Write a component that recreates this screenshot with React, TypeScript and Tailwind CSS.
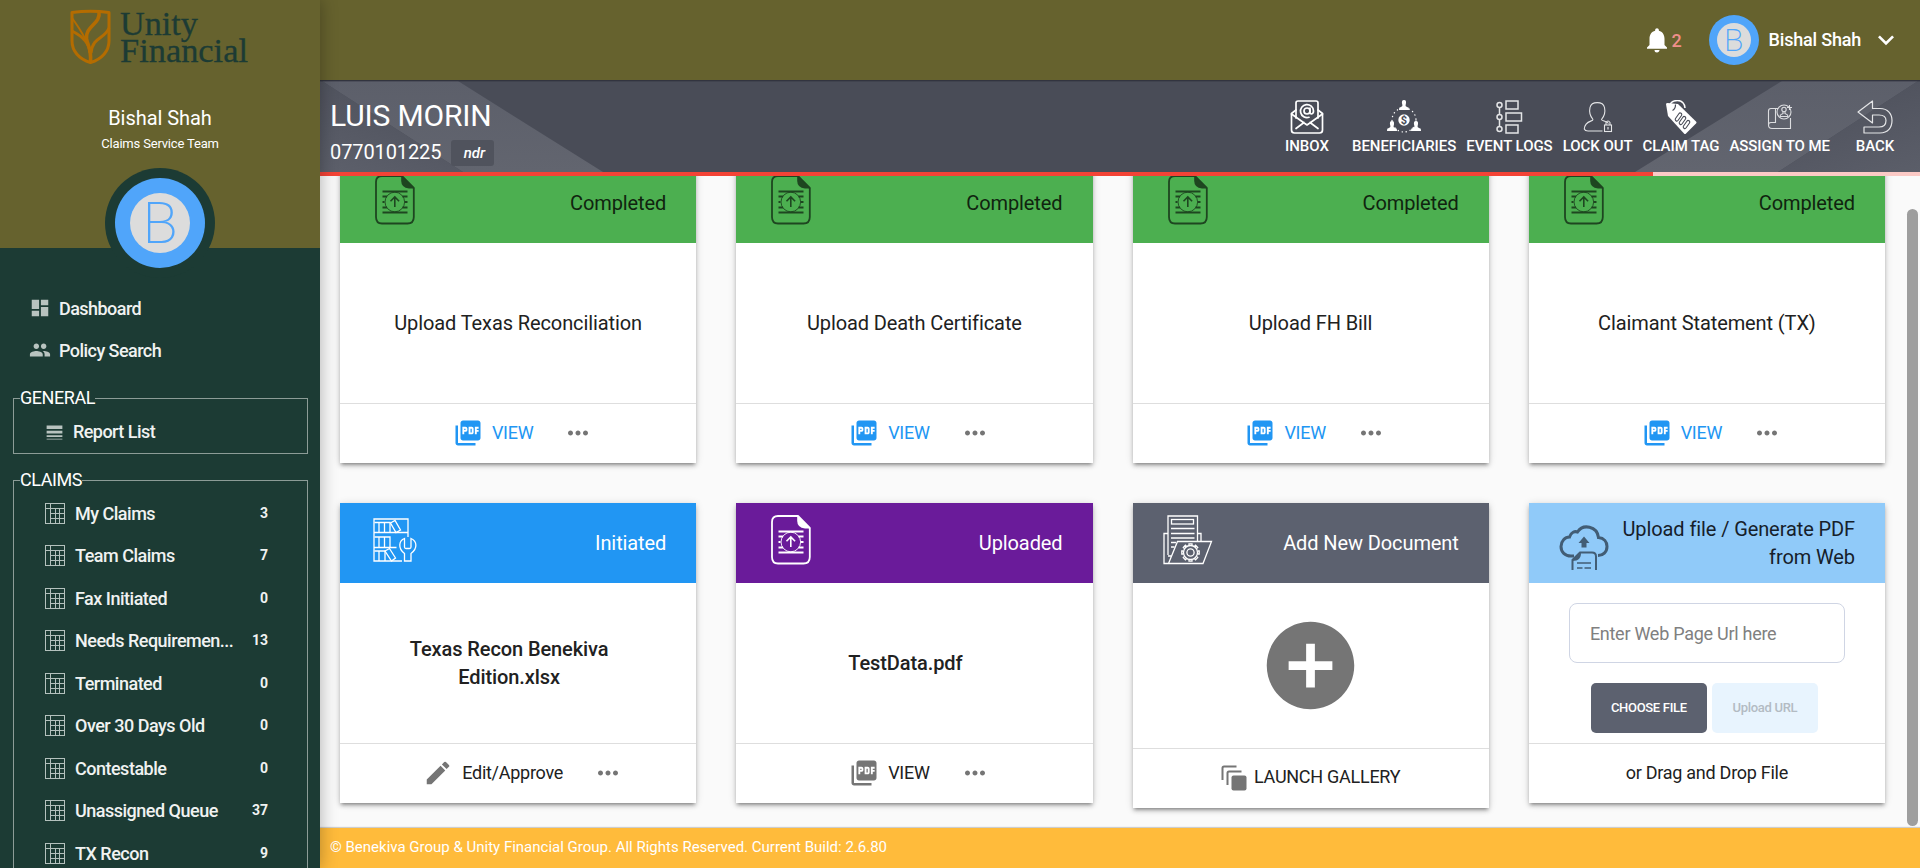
import React from "react";
import {
  MdAddCircle,
  MdDashboard,
  MdEdit,
  MdExpandMore,
  MdLineWeight,
  MdMoreHoriz,
  MdNotifications,
  MdPeople,
  MdPictureAsPdf,
} from "react-icons/md";

const cardShadow =
  "shadow-[0_3px_3px_-2px_rgba(0,0,0,0.3),0_3px_4px_0_rgba(0,0,0,0.18),0_1px_8px_0_rgba(0,0,0,0.14)]";

function Logo() {
  return (
    <svg width="184" height="66" viewBox="0 0 184 66" className="overflow-visible" aria-label="Unity Financial">
      <g fill="none" stroke="#b46c00" strokeWidth="3" strokeLinejoin="round">
        <path d="M4 5.500Q22.500 3 41 5.500V34C41 44 34 52 22.500 55.500C11 52 4 44 4 34Z" />
        <path d="M31 5C33 17 17 19 18.500 32C20 39 23.500 42 22.500 55" strokeWidth="3.600" />
        <path d="M4 24C14 29 21.500 36 22 46" />
        <path d="M41 21C36 33 25 29 23 46" />
        <path d="M4 11C10 19 13 24 18 33" strokeWidth="2" />
      </g>
      <g fill="#1c3b34" stroke="#1c3b34" strokeWidth="0.300" fontFamily="'Liberation Serif', serif" fontSize="34">
        <text x="52" y="27.500" textLength="78" lengthAdjust="spacingAndGlyphs">Unity</text>
        <text x="52" y="55" textLength="128" lengthAdjust="spacingAndGlyphs">Financial</text>
      </g>
    </svg>
  );
}

function SheetIcon() {
  return (
    <svg width="20" height="21" viewBox="0 0 20 21" fill="none" stroke="#b4c1bd" className="shrink-0">
      <rect x="0.500" y="0.500" width="19" height="20" />
      <path d="M5.500 0V20M0 5.500H20M10.500 5.500V20M14.500 5.500V20M5.500 10.500H20M5.500 15.500H20" />
    </svg>
  );
}

const queues: [string, number][] = [
  ["My Claims", 3],
  ["Team Claims", 7],
  ["Fax Initiated", 0],
  ["Needs Requiremen...", 13],
  ["Terminated", 0],
  ["Over 30 Days Old", 0],
  ["Contestable", 0],
  ["Unassigned Queue", 37],
  ["TX Recon", 9],
];

function Sidebar() {
  return (
    <aside className="relative z-20 flex h-full w-[320px] shrink-0 flex-col overflow-clip bg-[#1c3b34] text-white">
      <div className="flex h-[248px] shrink-0 flex-col items-center bg-[#66622e]">
        <div className="flex h-[104px] w-full shrink-0 justify-center pt-[7px]">
          <Logo />
        </div>
        <div className="text-[20px] leading-[28px] tracking-[-0.050px]">Bishal Shah</div>
        <div className="text-[13px] leading-[23px] tracking-[-0.180px]">Claims Service Team</div>
        <div className="mt-[13px] flex size-[110px] shrink-0 items-center justify-center rounded-full bg-[#1c3b34]">
          <div className="flex size-[90px] items-center justify-center rounded-full bg-[#50a5fa]">
            <div className="flex size-[60px] items-center justify-center rounded-full bg-[#dcdcdc] text-[58px] leading-none font-extralight text-[#50a5fa]">
              B
            </div>
          </div>
        </div>
      </div>
      <nav className="mt-[39px] flex flex-col text-[18px] font-medium tracking-[-0.550px] text-[#f0f2f1]">
        <a className="flex h-[42px] items-center gap-[8px] pl-[29px]">
          <MdDashboard size={22} className="text-[#b8c3bf]" />
          Dashboard
        </a>
        <a className="flex h-[42px] items-center gap-[8px] pl-[29px]">
          <MdPeople size={22} className="text-[#b8c3bf]" />
          Policy Search
        </a>
      </nav>
      <fieldset className="mr-[12px] ml-[13px] mt-[13px] flex h-[70px] shrink-0 border border-[#8c9c97] pl-[30px]">
        <legend className="ml-[-24px] text-[18px] leading-[28px] tracking-[-0.450px]">GENERAL</legend>
        <a className="flex h-[38px] items-center gap-[8px] text-[18px] font-medium tracking-[-0.550px] text-[#f0f2f1]">
          <MdLineWeight size={21} className="mt-[2px] text-[#b8c3bf]" />
          Report List
        </a>
      </fieldset>
      <fieldset className="mr-[12px] ml-[13px] mt-[12px] h-[500px] shrink-0 border border-[#8c9c97] pl-[31px]">
        <legend className="ml-[-25px] text-[18px] leading-[28px] tracking-[-0.450px]">CLAIMS</legend>
        <div className="-mt-[2px]">
          {queues.map(([name, count]) => (
            <a key={name} className="flex h-[42.500px] items-center text-[#f0f2f1]">
              <SheetIcon />
              <span className="ml-[10px] w-[160px] text-[18px] font-medium tracking-[-0.500px] whitespace-nowrap">{name}</span>
              <span className="w-[33px] text-right text-[14px] font-bold">{count}</span>
            </a>
          ))}
        </div>
      </fieldset>
    </aside>
  );
}

function InboxIcon() {
  return (
    <svg width="34" height="34" viewBox="0 0 34 34" fill="none" stroke="#fff" strokeWidth="1.700" strokeLinejoin="round" strokeLinecap="round">
      <path d="M6 18V3Q6 1 8 1H26Q28 1 28 3V18" />
      <path d="M6 10L1.500 13.500V30Q1.500 33 4.500 33H29.500Q32.500 33 32.500 30V13.500L28 10" />
      <path d="M1.500 14L17 25L32.500 14M6 28.500L14 22.500M28 28.500L20 22.500" />
      <circle cx="17" cy="11" r="3" />
      <path d="M20 8V12.500Q20 14 21.500 14Q23.500 13.500 23.500 11A6.500 6.500 0 1 0 19 17.300" />
    </svg>
  );
}

function BeneficiariesIcon() {
  const person = "M3 0C.8 0 .6 2 1.200 4.200C1.700 6 1.500 6.400-1.500 7.500Q-2 8-2 10H8Q8 8 7.500 7.500C4.500 6.400 4.300 6 4.800 4.200C5.400 2 5.200 0 3 0Z";
  return (
    <svg width="34" height="34" viewBox="0 0 34 34" fill="#fff">
      <path d={person} transform="translate(14 0)" />
      <path d={person} transform="translate(2 21)" />
      <path d={person} transform="translate(26 21)" />
      <circle cx="17" cy="20" r="5.700" />
      <circle cx="17" cy="20" r="12" fill="none" stroke="#fff" strokeWidth="1.400" strokeDasharray="0.100 4" strokeLinecap="round" />
      <text x="17" y="24" textAnchor="middle" fontSize="11" fontFamily="Roboto, sans-serif" fill="#494c57" fontWeight="700">$</text>
    </svg>
  );
}

function EventLogsIcon() {
  return (
    <svg width="34" height="34" viewBox="0 0 34 34" fill="none" stroke="#e4e5e7" strokeWidth="1.500">
      <rect x="14" y="1" width="12" height="8" />
      <rect x="14" y="13" width="15.500" height="8" />
      <rect x="14" y="25" width="12" height="8" />
      <circle cx="7.500" cy="5" r="2.500" />
      <circle cx="7.500" cy="17" r="2.500" />
      <circle cx="7.500" cy="29" r="2.500" />
      <path d="M7.500 7.500V14.500M7.500 19.500V26.500" />
    </svg>
  );
}

function LockOutIcon() {
  return (
    <svg width="34" height="34" viewBox="-2.500 0 34 34" fill="none" stroke="#e4e5e7" strokeWidth="1.100">
      <path d="M9.500 19.500C7 16.500 5.500 12 6.500 7.500C8 1 19.500 1 21 7.500C22 12 20.500 16.500 18 19.500C18 21 23.500 21 25 23.500M9.500 19.500C9.500 22 1.500 20 .8 29Q1.500 31 4.500 31H19" />
      <rect x="21" y="25" width="7" height="6.500" />
      <path d="M22.500 25V22.500Q24.500 19.500 26.500 22.500V25M24.500 27V29.500" />
    </svg>
  );
}

function ClaimTagIcon() {
  return (
    <svg width="34" height="34" viewBox="0 0 34 34">
      <path d="M2 4Q2.200 3 3.500 3L14 4L32 21.500Q33 22.500 32 23.500L22 33.500Q21 34.500 20 33.500L4 16Z" fill="#fff" />
      <path d="M6.500 9.500C4 3 9 .5 13.500 .5C18 .5 21 4 21 8" fill="none" stroke="#fff" strokeWidth="1.500" />
      <path d="M11.500 4.500Q11.500 9 8.500 10.500" fill="none" stroke="#494c57" strokeWidth="1.200" />
      <g fill="#fff" stroke="#494c57" strokeWidth="1.100">
        <rect x="-1.600" y="-4.500" width="3.200" height="9" rx="1.600" transform="translate(14.500 17) rotate(35)" />
        <rect x="-1.600" y="-4.500" width="3.200" height="9" rx="1.600" transform="translate(18.500 20.500) rotate(35)" />
        <rect x="-1.600" y="-4.500" width="3.200" height="9" rx="1.600" transform="translate(22.500 24.500) rotate(35)" />
      </g>
    </svg>
  );
}

function AssignIcon() {
  return (
    <svg width="34" height="34" viewBox="-1 0 34 34" fill="none" stroke="#dcdde0" strokeWidth="1.100">
      <path d="M11.500 8.500H7Q4.500 8.500 4.500 11V25Q4.500 28.500 8 28.500H26.500V18M11.500 8.500V22.500H7Q4.500 22.500 4.500 25M11.500 8.500H14" />
      <circle cx="20" cy="12" r="7" />
      <circle cx="20" cy="9.500" r="2.200" />
      <path d="M15.800 16.500Q16 14.500 19 13.500V11.500M24.200 16.500Q24 14.500 21 13.500V11.500M15.800 16.500H24.200M25.500 5V10M23 7.500H28" />
    </svg>
  );
}

function BackIcon() {
  return (
    <svg width="36" height="34" viewBox="0 0 36 34" fill="none" stroke="#e4e5e7" strokeWidth="1.200" strokeLinejoin="round">
      <path d="M1 12L15.500 1V8.500H23C31 8.500 35 14 35 20.500C35 27.500 31 33 23 33H7V27H22C27 27 29 24 29 20.500C29 17.500 27 15 22 15H15.500V23Z" />
    </svg>
  );
}

const tools = [
  { label: "INBOX", icon: InboxIcon },
  { label: "BENEFICIARIES", icon: BeneficiariesIcon },
  { label: "EVENT LOGS", icon: EventLogsIcon },
  { label: "LOCK OUT", icon: LockOutIcon },
  { label: "CLAIM TAG", icon: ClaimTagIcon },
  { label: "ASSIGN TO ME", icon: AssignIcon },
  { label: "BACK", icon: BackIcon },
];

function ToolbarBackdrop() {
  return (
    <svg className="absolute inset-0" width="1600" height="92" viewBox="0 0 1600 92">
      <defs>
        <linearGradient id="band" x1="0" y1="0" x2="0" y2="1">
          <stop offset="0" stopColor="#5c5f6a" />
          <stop offset="1" stopColor="#62656f" />
        </linearGradient>
        <linearGradient id="corner" x1="0" y1="1" x2="0.450" y2="0.150">
          <stop offset="0" stopColor="#5d606b" />
          <stop offset="1" stopColor="#50535e" />
        </linearGradient>
        <linearGradient id="cornerRight" x1="1" y1="1" x2="0.550" y2="0.150">
          <stop offset="0" stopColor="#5b5e69" />
          <stop offset="1" stopColor="#50535e" />
        </linearGradient>
      </defs>
      <path d="M2 1H138L283 92H143Z" fill="url(#band)" />
      <path d="M0 1H2L143 92H0Z" fill="url(#corner)" />
      <path d="M1598 1H1462L1315 92H1458Z" fill="url(#band)" />
      <path d="M1600 1H1598L1458 92H1600Z" fill="url(#cornerRight)" />
      <path d="M0 0.500H1600" stroke="#32343f" />
      <path d="M0 1.500H1600" stroke="#32343f" strokeOpacity="0.350" />
    </svg>
  );
}

function Header() {
  return (
    <>
      <header className="flex h-[80px] shrink-0 items-center justify-end bg-[#66622e] pr-[18px] text-white">
        <MdNotifications size={30} />
        <span className="ml-[-0.500px] text-[18px] font-medium text-[#ef8f8a]">2</span>
        <div className="ml-[27px] flex size-[50px] items-center justify-center rounded-full bg-[#50a5fa]">
          <div className="flex size-[34px] items-center justify-center rounded-full bg-[#dcdcdc] text-[32px] leading-none font-extralight text-[#50a5fa]">
            B
          </div>
        </div>
        <span className="mr-[9px] ml-[10px] -mt-[2px] text-[18px] font-medium tracking-[-0.200px]">Bishal Shah</span>
        <MdExpandMore size={32} />
      </header>
      <div className="relative flex h-[92px] shrink-0 justify-between bg-[#494c57] text-white">
        <ToolbarBackdrop />
        <div className="relative pt-[17px] pl-[10px]">
          <div className="text-[30px] leading-[38px] tracking-[-0.150px]">LUIS MORIN</div>
          <div className="flex items-center">
            <span className="text-[20px] leading-[34px] tracking-[-0.100px]">0770101225</span>
            <span className="mt-[2px] ml-[10px] flex h-[26px] w-[43px] items-center justify-center rounded-[3px] bg-[#50535d] pl-[3px] text-[15px] font-medium italic">
              ndr
            </span>
          </div>
        </div>
        <div className="relative flex gap-[10px] pt-[20px] pr-[10px]">
          {tools.map(({ label, icon: Icon }) => (
            <div key={label} className="flex min-w-[70px] flex-col items-center">
              <Icon />
              <span className="text-[15px] leading-[24px] font-medium tracking-[-0.050px] whitespace-nowrap">{label}</span>
            </div>
          ))}
        </div>
      </div>
      <div className="flex h-[4px] shrink-0 bg-[#fccac6]">
        <div className="w-[1333px] bg-[#f44336]" />
      </div>
    </>
  );
}

function UploadDocIcon() {
  return (
    <svg width="50" height="50" viewBox="0 0 50 50" fill="none" stroke="currentColor">
      <path d="M32 1H12Q6 1 6 7V42Q6 48.500 12 48.500H37.500Q43.800 48.500 43.800 42V13Z" strokeWidth="1.800" strokeLinejoin="round" />
      <path d="M31.200 .5L44.500 13.500H39Q31.200 12.500 31.200 6Z" fill="currentColor" stroke="none" />
      <path d="M12.500 16.500H37.500M12.500 37.500H37.500M12.500 21.500H17M32.500 21.500H37.500M12.500 27H14.500M35 27H37.500M12.500 32.500H17M32.500 32.500H37.500" strokeWidth="1.800" />
      <circle cx="24.800" cy="27" r="9.800" strokeWidth="0.900" />
      <path d="M24.800 32V22.300M20.500 26.300L24.800 22L29.100 26.300" strokeWidth="1.600" />
    </svg>
  );
}

function ShelfIcon() {
  return (
    <svg width="50" height="50" viewBox="0 0 50 50" fill="none" stroke="#fff" strokeWidth="1.300">
      <path d="M38 22V4H4V46H32M4 17.500H38M4 32.500H26.500" />
      <path d="M4.500 7.500H20V17M9 7.500V17M14.500 7.500V17M4.500 22H20V32M9 22V32M14.500 22V32M4.500 36H15V46M9 36V46" />
      <path d="M20.500 8L25 5.500L30.500 15L26 17.500ZM15 36L19.500 33.500L25.500 43L21.500 46Z" />
      <path d="M34.500 23.500C29 25.500 27.500 33 34.500 38.500V46H41V38.500C48 33.500 47 26 41 23.500V32Q41 33.500 39.500 33.500H36Q34.500 33.500 34.500 32Z" />
    </svg>
  );
}

function FolderGearIcon() {
  const teeth = Array.from({ length: 8 }, (_, i) => i * 45);
  return (
    <svg width="50" height="50" viewBox="0 0 50 50" fill="none" stroke="#fff" strokeWidth="1.300">
      <path d="M5 40V1H34.500V26M5 18.500H1V48.500H40L48.500 26.500H14.500L5.500 48.500M34.500 18.500H38V26" />
      <rect x="8.500" y="4.500" width="22" height="4.500" />
      <path d="M8 13.500H31.500M8 18.500H31.500M8 23H31.500M8 27.500H13M8 32H11.500M5 41H8" />
      <circle cx="27.500" cy="37.500" r="3.600" />
      <circle cx="27.500" cy="37.500" r="7" />
      {teeth.map((a) => (
        <path key={a} d="M26 30.500V28.800H29V30.500" transform={`rotate(${a} 27.500 37.500)`} />
      ))}
    </svg>
  );
}

function CloudUploadIcon() {
  return (
    <svg width="50" height="50" viewBox="0 0 50 50" fill="none" stroke="#425d75">
      <path d="M15 33H12C6 33 2 29 2 23.500C2 18 6 14 10.500 14C12 9 16 8 18.500 9C24 .5 38 3 39.500 14.500C45 15 48 19 48 23.500C48 29 44 32.500 39 32.500" strokeWidth="3" />
      <path d="M25 13.500L30.500 20H27.500V24.500H22.500V20H19.500Z" fill="#425d75" stroke="none" />
      <path d="M13.500 47V37L21 29.500H33Q37 29.500 37 33.500V47" strokeWidth="2" />
      <path d="M13 38L22 29.500C22 35 20 38 13 38Z" fill="#425d75" stroke="none" />
      <path d="M18 40H32M18 45H23.500M25.500 45H32" strokeWidth="1.300" />
    </svg>
  );
}

function GalleryIcon() {
  return (
    <svg width="26" height="26" viewBox="0 0 26 26" fill="none" stroke="#757575" strokeWidth="2">
      <path d="M1.500 15V3Q1.500 1.500 3 1.500H15.500M6.500 20V8Q6.500 6.500 8 6.500H20.500" />
      <rect x="10.500" y="10.500" width="15" height="15" rx="2" fill="#757575" stroke="none" />
    </svg>
  );
}

type CardProps = {
  head: string;
  icon: React.ReactNode;
  title: string;
  children: React.ReactNode;
  footer: React.ReactNode;
  iconClass?: string;
};

function Card({ head, icon, title, children, footer, iconClass = "-mt-[6px]" }: CardProps) {
  return (
    <section className={`flex flex-col self-start bg-white text-[#212121] ${cardShadow}`}>
      <div className={`flex h-[80px] items-center justify-between pr-[30px] pl-[30px] ${head}`}>
        <div className={`shrink-0 ${iconClass}`}>{icon}</div>
        <div className="text-right text-[20px] leading-[28px] tracking-[-0.100px]">{title}</div>
      </div>
      {children}
      <div className="flex h-[60px] items-center justify-center border-t border-[#dedede] pb-[2px] text-[18px] tracking-[-0.270px]">
        {footer}
      </div>
    </section>
  );
}

function Actions({ icon, label, tone }: { icon: React.ReactNode; label: string; tone: string }) {
  return (
    <div className={`flex items-center pl-[10px] ${tone}`}>
      {icon}
      <span className="mr-[30px] ml-[9px]">{label}</span>
      <MdMoreHoriz size={30} className="text-[#757575]" />
    </div>
  );
}

function DocumentGrid() {
  const completed = ["Upload Texas Reconciliation", "Upload Death Certificate", "Upload FH Bill", "Claimant Statement (TX)"];
  return (
    <div className="-mt-[13px] grid w-full grid-cols-4 gap-[40px] pr-[35px] pl-[20px]">
      {completed.map((name) => (
        <Card
          key={name}
          head="bg-[#4caf50] text-[#10240f]"
          icon={<div className="text-[#1e4620]"><UploadDocIcon /></div>}
          title="Completed"
          footer={<Actions tone="text-[#2196f3]" icon={<MdPictureAsPdf size={30} />} label="VIEW" />}
        >
          <div className="flex h-[160px] items-center justify-center text-[20px] leading-[28px] tracking-[-0.100px]">{name}</div>
        </Card>
      ))}
      <Card
        head="bg-[#2196f3] text-white"
        icon={<ShelfIcon />}
        title="Initiated"
        footer={<Actions tone="" icon={<MdEdit size={30} className="text-[#757575]" />} label="Edit/Approve" />}
      >
        <div className="flex h-[160px] items-center justify-center pr-[58px] pl-[40px] text-center text-[20px] leading-[28px] font-medium tracking-[-0.100px]">
          Texas Recon Benekiva Edition.xlsx
        </div>
      </Card>
      <Card
        head="bg-[#6a1b9a] text-white"
        icon={<UploadDocIcon />}
        title="Uploaded"
        footer={<Actions tone="" icon={<MdPictureAsPdf size={30} className="text-[#757575]" />} label="VIEW" />}
      >
        <div className="flex h-[160px] items-center justify-center pr-[18px] text-[20px] leading-[28px] font-medium tracking-[-0.100px]">
          TestData.pdf
        </div>
      </Card>
      <Card
        head="bg-[#5c616f] text-white"
        icon={<FolderGearIcon />}
        title="Add New Document"
        footer={
          <div className="flex items-center gap-[7px]">
            <GalleryIcon />
            <span className="-mt-[2px]">LAUNCH GALLERY</span>
          </div>
        }
      >
        <div className="flex h-[165px] items-center justify-center">
          <MdAddCircle size={105} className="text-[#757575]" />
        </div>
      </Card>
      <Card
        head="bg-[#90caf9] text-[#16202a]"
        icon={<CloudUploadIcon />}
        iconClass="mt-[10px]"
        title="Upload file / Generate PDF from Web"
        footer={<span>or Drag and Drop File</span>}
      >
        <div className="flex h-[160px] flex-col items-center pt-[20px]">
          <input
            className="h-[60px] w-[276px] rounded-[8px] border border-[#cfd5e4] px-[20px] text-[18px] tracking-[-0.270px] placeholder:text-[#808080]"
            placeholder="Enter Web Page Url here"
          />
          <div className="mt-[20px] mr-[5px] flex gap-[5px]">
            <button className="h-[50px] w-[116px] rounded-[5px] bg-[#5c616f] text-[13px] font-medium tracking-[-0.300px] whitespace-nowrap text-white">
              CHOOSE FILE
            </button>
            <button className="h-[50px] w-[106px] rounded-[5px] bg-[#e8f4fe] text-[13px] font-medium tracking-[-0.300px] whitespace-nowrap text-[#b3bbc3]">
              Upload URL
            </button>
          </div>
        </div>
      </Card>
    </div>
  );
}

export default function App() {
  return (
    <div className="flex h-[868px] w-[1920px] overflow-hidden bg-[#fafafa] font-[Roboto,sans-serif]">
      <div className="relative z-20 flex h-full shadow-[0_0_16px_1px_rgba(0,0,0,0.280)]">
        <Sidebar />
      </div>
      <div className="flex min-w-0 flex-1 flex-col">
        <Header />
        <main className="relative min-h-0 flex-1 overflow-hidden">
          <DocumentGrid />
          <div className="absolute top-[33px] right-[2px] h-[617px] w-[11px] rounded-full bg-[#9e9e9e]" />
        </main>
        <footer className="relative flex h-[40px] shrink-0 items-center bg-[#ffbb3b] pb-[2px] pl-[10px] text-[15px] text-white shadow-[0_-1px_1px_rgba(0,0,0,0.180)]">
          © Benekiva Group &amp; Unity Financial Group. All Rights Reserved. Current Build: 2.6.80
        </footer>
      </div>
    </div>
  );
}
